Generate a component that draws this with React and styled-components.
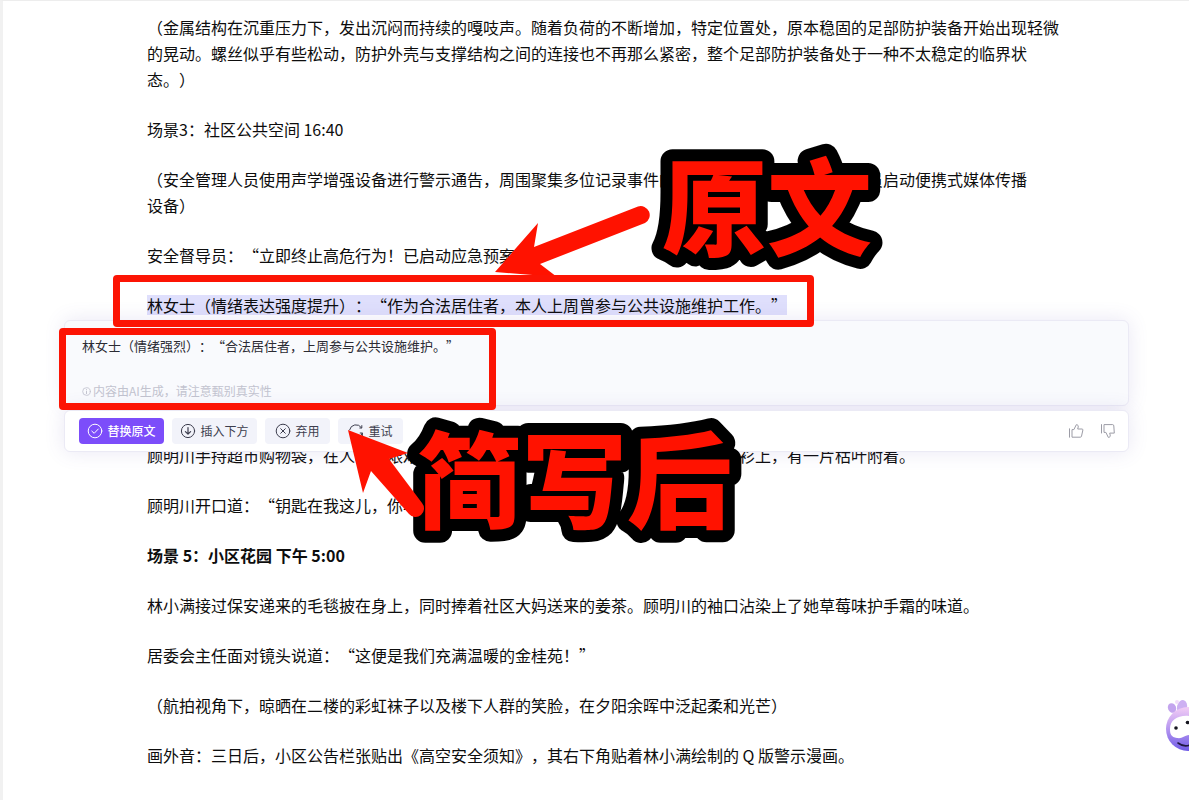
import styled, { createGlobalStyle, css } from 'styled-components'

const GlobalStyle = createGlobalStyle`
  body {
    margin: 0;
    background: #ffffff;
  }

  * {
    box-sizing: border-box;
  }
`

const Page = styled.main`
  position: relative;
  min-height: 100vh;
  overflow: hidden;
  border-top: 1px solid #ededed;
  border-left: 3px solid #f1f1f1;
  background: #ffffff;
  font-family: 'Noto Sans CJK SC', sans-serif;
  color: #0d0d0d;
  text-spacing-trim: space-all;
`

const Article = styled.article`
  max-width: 1080px;
  padding: 13px 20px 30px 144px;
`

const Paragraph = styled.p`
  margin: 0 0 24px;
  font-size: 16px;
  line-height: 26px;
  font-weight: ${props => (props.$bold ? 700 : 400)};
`

const Selected = styled.mark`
  display: inline-block;
  line-height: 20px;
  background: #dfdffc;
  color: inherit;
`

const Popup = styled.section`
  position: absolute;
  top: 319px;
  left: 61px;
  right: 60px;
  display: flex;
  flex-direction: column;
  gap: 4px;
`

const card = css`
  border: 1px solid #ebeaf5;
  border-radius: 6px;
  box-shadow: 0 0 20px rgba(96, 84, 180, 0.14);
`

const Result = styled.div`
  ${card}
  display: flex;
  flex-direction: column;
  justify-content: space-between;
  height: 86px;
  padding: 15px 17px 5px;
  background: #f9fafd;
`

const ResultText = styled.p`
  margin: 0;
  font-size: 13px;
  line-height: 20px;
  color: #2b2b33;
`

const Notice = styled.p`
  display: flex;
  align-items: center;
  gap: 2px;
  margin: 0;
  font-size: 12px;
  line-height: 18px;
  color: #c2c3cf;
`

const Toolbar = styled.div`
  ${card}
  display: flex;
  align-items: center;
  gap: 8px;
  height: 42px;
  padding: 0 12px 0 14px;
  background: #ffffff;
`

const ActionBtn = styled.button`
  display: flex;
  align-items: center;
  justify-content: center;
  gap: 4px;
  min-width: ${props => (props.$wide ? 85 : 65)}px;
  height: 26px;
  padding: 0 8px;
  border: none;
  border-radius: 4px;
  background: ${props => (props.$primary ? '#7c4dfa' : '#f2f3fa')};
  color: ${props => (props.$primary ? '#ffffff' : '#3c3d4d')};
  font-family: inherit;
  font-size: 12px;
  font-weight: ${props => (props.$primary ? 500 : 400)};
  line-height: 18px;
  white-space: nowrap;
  cursor: pointer;
`

const Feedback = styled.div`
  display: flex;
  gap: 16px;
  margin-left: auto;
`

const FeedbackBtn = styled.button`
  display: flex;
  padding: 0;
  border: none;
  background: none;
  color: #9c9ca6;
  cursor: pointer;
`

const Frame = styled.div`
  position: absolute;
  top: ${props => props.$top}px;
  left: ${props => props.$left}px;
  width: ${props => props.$width}px;
  height: ${props => props.$height}px;
  border: 7px solid #fc1404;
  border-radius: 4px;
  pointer-events: none;
`

const Markup = styled.svg`
  position: absolute;
  top: -1px;
  left: -3px;
  fill: #ff1200;
  pointer-events: none;
`

const Caption = styled.text`
  font-size: 105px;
  font-weight: 900;
  stroke: #000000;
  stroke-width: 24px;
  stroke-linejoin: round;
  paint-order: stroke fill;
`

const MascotBtn = styled.button`
  position: absolute;
  top: 697px;
  right: -27px;
  padding: 0;
  border: none;
  background: none;
  cursor: pointer;
`

const Icon = ({ size = 16, children }) => (
  <svg
    width={size}
    height={size}
    viewBox="0 0 16 16"
    fill="none"
    stroke="currentColor"
    strokeWidth="1"
    strokeLinecap="round"
    strokeLinejoin="round"
    aria-hidden="true"
  >
    {children}
  </svg>
)

const CheckIcon = () => (
  <Icon>
    <circle cx="8" cy="8" r="6.8" />
    <path d="M4.8 8.1 7.2 10.3 11.3 6" />
  </Icon>
)

const InsertIcon = () => (
  <Icon>
    <circle cx="8" cy="8" r="6.6" />
    <path d="M8 4.6v6.4M5.4 8.6 8 11.2l2.6-2.6" strokeWidth="1.2" />
  </Icon>
)

const DiscardIcon = () => (
  <Icon>
    <circle cx="8" cy="8" r="6.8" />
    <path d="m5.7 5.7 4.6 4.6M10.3 5.7l-4.6 4.6" />
  </Icon>
)

const RetryIcon = () => (
  <Icon>
    <path d="M13.4 4.6A6.6 6.6 0 0 0 1.6 6.8M1.6 9.4a6.6 6.6 0 0 0 12.6.8" />
    <path d="M13.8 2.6v2.4h-2M14.4 12.6v-2.6h-2.2" />
  </Icon>
)

const InfoIcon = () => (
  <Icon size={9}>
    <circle cx="8" cy="8" r="6.8" strokeWidth="1.5" />
    <path d="M8 7.4v4M8 4.4v.4" strokeWidth="1.8" />
  </Icon>
)

const ThumbUp = () => (
  <Icon>
    <path d="M1.5 5.8v8.4M4.4 6.6h1.5L8.3 1.7c1.6 0 2.2 1 1.9 2.3l-.5 2h4.4c.6 0 .9.5.8 1l-1.4 6.2c-.1.6-.5 1-1.1 1h-8z" />
  </Icon>
)

const ThumbDown = () => (
  <Icon>
    <path d="M1.5 1.6V10M4.4 9.4h1.5l2.4 5c1.6 0 2.2-1 1.9-2.3l-.5-2h4.6l-.5-7.2c0-.8-.5-1.3-1.1-1.3H4.4z" />
  </Icon>
)

const Mascot = () => (
  <svg width="52" height="58" viewBox="0 0 52 58" aria-hidden="true">
    <defs>
      <linearGradient id="mascotBody" x1="0" y1="0" x2="0" y2="1">
        <stop offset="0" stopColor="#f3cdf5" />
        <stop offset="0.5" stopColor="#b596f0" />
        <stop offset="1" stopColor="#6f5be6" />
      </linearGradient>
    </defs>
    <ellipse cx="8" cy="10" rx="4" ry="5" fill="#c3a4ee" transform="rotate(-25 8 10)" />
    <ellipse cx="18" cy="9" rx="5" ry="7" fill="#cdb0f2" transform="rotate(15 18 9)" />
    <circle cx="13" cy="4" r="2" fill="#f1dcfa" />
    <circle cx="24" cy="31" r="22" fill="url(#mascotBody)" />
    <path d="M6 31c0-9 8-14 19-13s18 5 18 11-9 8-16 8-8 4-14 3-7-4-7-9z" fill="#ffffff" />
    <circle cx="12" cy="30" r="1.8" fill="#15151f" />
    <circle cx="23.500" cy="24.500" r="1.8" fill="#15151f" />
    <path d="M14 45c4 3 9 4 14 1" fill="none" stroke="#20183f" strokeWidth="1.6" strokeLinecap="round" />
  </svg>
)

const App = () => {
  return (
    <>
      <GlobalStyle />
      <Page>
        <Article>
          <Paragraph>
            （金属结构在沉重压力下，发出沉闷而持续的嘎吱声。随着负荷的不断增加，特定位置处，原本稳固的足部防护装备开始出现轻微
            <br />
            的晃动。螺丝似乎有些松动，防护外壳与支撑结构之间的连接也不再那么紧密，整个足部防护装备处于一种不太稳定的临界状
            <br />
            态。）
          </Paragraph>
          <Paragraph>场景3：社区公共空间 16:40</Paragraph>
          <Paragraph>
            （安全管理人员使用声学增强设备进行警示通告，周围聚集多位记录事件的科技爱好者，现场有技术人员启动便携式媒体传播
            <br />
            设备）
          </Paragraph>
          <Paragraph>安全督导员：“立即终止高危行为！已启动应急预案。”</Paragraph>
          <Paragraph>
            <Selected>林女士（情绪表达强度提升）：“作为合法居住者，本人上周曾参与公共设施维护工作。”</Selected>
          </Paragraph>
          <Paragraph><br /></Paragraph>
          <Paragraph $bold>场景 4：小区楼下 下午 4:50</Paragraph>
          <Paragraph>
            顾明川手持超市购物袋，在人群中艰难地穿行着朝她走来，他那件浅灰色的旧棉质衬衫上，有一片枯叶附着。
          </Paragraph>
          <Paragraph>顾明川开口道：“钥匙在我这儿，你早就知道。”</Paragraph>
          <Paragraph $bold>场景 5：小区花园 下午 5:00</Paragraph>
          <Paragraph>
            林小满接过保安递来的毛毯披在身上，同时捧着社区大妈送来的姜茶。顾明川的袖口沾染上了她草莓味护手霜的味道。
          </Paragraph>
          <Paragraph>居委会主任面对镜头说道：“这便是我们充满温暖的金桂苑！”</Paragraph>
          <Paragraph>（航拍视角下，晾晒在二楼的彩虹袜子以及楼下人群的笑脸，在夕阳余晖中泛起柔和光芒）</Paragraph>
          <Paragraph>画外音：三日后，小区公告栏张贴出《高空安全须知》，其右下角贴着林小满绘制的 Q 版警示漫画。</Paragraph>
        </Article>

        <Popup>
          <Result>
            <ResultText>林女士（情绪强烈）：“合法居住者，上周参与公共设施维护。”</ResultText>
            <Notice>
              <InfoIcon />
              内容由AI生成，请注意甄别真实性
            </Notice>
          </Result>
          <Toolbar>
            <ActionBtn $primary $wide><CheckIcon />替换原文</ActionBtn>
            <ActionBtn $wide><InsertIcon />插入下方</ActionBtn>
            <ActionBtn><DiscardIcon />弃用</ActionBtn>
            <ActionBtn><RetryIcon />重试</ActionBtn>
            <Feedback>
              <FeedbackBtn aria-label="赞"><ThumbUp /></FeedbackBtn>
              <FeedbackBtn aria-label="踩"><ThumbDown /></FeedbackBtn>
            </Feedback>
          </Toolbar>
        </Popup>

        <MascotBtn aria-label="助手"><Mascot /></MascotBtn>

        <Markup width="900" height="560" viewBox="0 0 900 560">
          <Caption x="662" y="247">原文</Caption>
          <Caption x="417" y="520">简写后</Caption>
          <path d="M495 272 538 223 534 247 638 206.500A9 9 0 0 1 645 223L540 264 557 277z" />
          <path d="M348 430 408 453 389 459 422 503A8.500 8.500 0 0 1 409 514L371 471 363 493z" />
        </Markup>
        <Frame $top={274} $left={110} $width={701} $height={52} />
        <Frame $top={327} $left={56} $width={437} $height={82} />
      </Page>
    </>
  )
}

export default App
